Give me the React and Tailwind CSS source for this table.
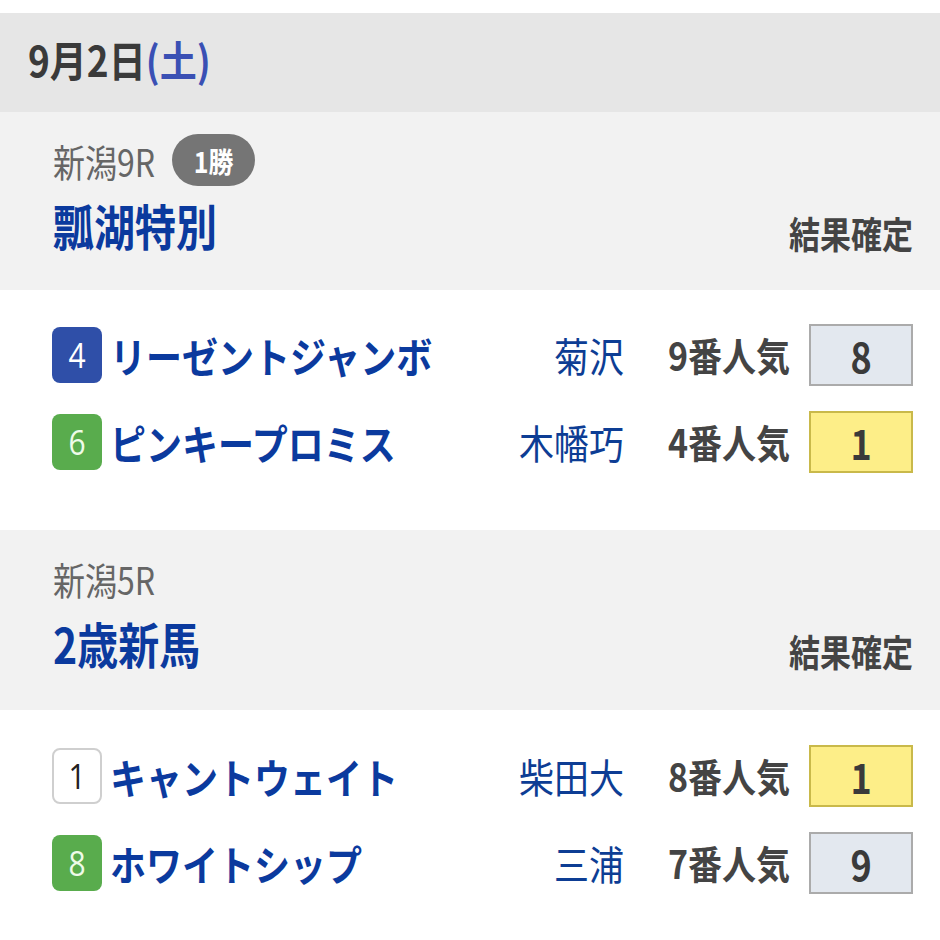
import React from "react";

const FONT = { fontFamily: '"Noto Sans CJK JP", "Noto Sans", sans-serif' };

function Waku({ n, kind }) {
  const cls =
    kind === "blue"
      ? "bg-[#2f4fa8] text-white"
      : kind === "green"
      ? "bg-[#59ac4d] text-[#eefbe9]"
      : "bg-white text-[#222] border-2 border-[#cfcfcf]";
  return (
    <div
      className={`w-[50px] h-[56px] rounded-[8px] flex items-center justify-center shrink-0 text-[30px] leading-none ${cls}`}
      style={{ fontFamily: '"Open Sans", sans-serif' }}
    >
      <span className="inline-block scale-y-[1.15]">{n}</span>
    </div>
  );
}

function Row({ waku, kind, name, jockey, pop, rank }) {
  const box =
    rank === 1
      ? "bg-[#fdee88] border-[#c9b94a]"
      : "bg-[#e3e8ef] border-[#ababab]";
  return (
    <div className="flex items-center h-[87px]">
      <Waku n={waku} kind={kind} />
      <div className="ml-[8px] text-[36px] font-bold text-[#0b3a9e] leading-none whitespace-nowrap">
        <span className="inline-block scale-y-[1.15]">{name}</span>
      </div>
      <div className="ml-auto text-[35px] text-[#0d3d94] leading-none whitespace-nowrap">
        <span className="inline-block scale-y-[1.15]">{jockey}</span>
      </div>
      <div className="ml-[44px] w-[120px] text-[34px] font-bold text-[#444] leading-none whitespace-nowrap">
        <span className="inline-block scale-y-[1.15]">{pop}番人気</span>
      </div>
      <div
        className={`ml-[21px] w-[104px] h-[62px] border-2 flex items-center justify-center text-[36px] font-bold text-[#3a3a3a] leading-none ${box}`}
      >
        <span className="inline-block scale-y-[1.15]">{rank}</span>
      </div>
    </div>
  );
}

function RaceHeader({ place, grade, title, tall }) {
  return (
    <div
      className={`${tall ? "h-[180px]" : "h-[178px]"} bg-[#f2f2f2] pl-[53px] pr-[27px] pt-[22px]`}
    >
      <div className="flex items-center h-[52px]">
        <span className="inline-block scale-y-[1.18] text-[32px] text-[#666] leading-none">
          {place}
        </span>
        {grade && (
          <span className="ml-[17px] h-[52px] w-[83px] rounded-full bg-[#757575] text-white font-bold text-[25px] flex items-center justify-center leading-none">
            <span className="inline-block scale-y-[1.15]">{grade}</span>
          </span>
        )}
      </div>
      <div className="flex items-end justify-between mt-[19px]">
        <span className="inline-block scale-y-[1.18] text-[41px] font-bold text-[#0b3a9e] leading-none">
          {title}
        </span>
        <span className="inline-block scale-y-[1.2] text-[31px] font-bold text-[#444] leading-none mb-[-2px]">
          結果確定
        </span>
      </div>
    </div>
  );
}

export default function App() {
  return (
    <div className="w-[940px] h-[940px] bg-white pt-[13px]" style={FONT}>
      <div className="h-[99px] bg-[#e6e6e6] flex items-center pl-[28px] pb-[6px]">
        <span className="inline-block scale-y-[1.15] text-[37px] font-bold text-[#3a3a3a] leading-none">
          9月2日<span className="text-[#3a50b4]">(土)</span>
        </span>
      </div>
      <RaceHeader place="新潟9R" grade="1勝" title="瓢湖特別" />
      <div className="h-[240px] pl-[52px] pr-[27px] pt-[21px]">
        <Row waku="4" kind="blue" name="リーゼントジャンボ" jockey="菊沢" pop="9" rank={8} />
        <Row waku="6" kind="green" name="ピンキープロミス" jockey="木幡巧" pop="4" rank={1} />
      </div>
      <RaceHeader place="新潟5R" title="2歳新馬" tall />
      <div className="pl-[52px] pr-[27px] pt-[22px]">
        <Row waku="1" kind="white" name="キャントウェイト" jockey="柴田大" pop="8" rank={1} />
        <Row waku="8" kind="green" name="ホワイトシップ" jockey="三浦" pop="7" rank={9} />
      </div>
    </div>
  );
}
